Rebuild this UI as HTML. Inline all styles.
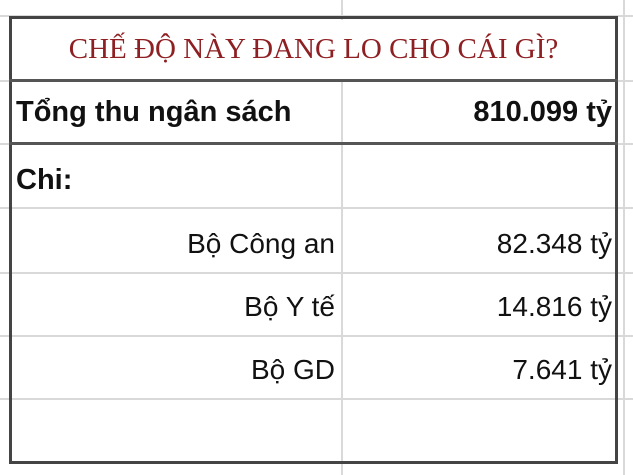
<!DOCTYPE html>
<html><head><meta charset="utf-8"><style>
body{margin:0;width:633px;height:475px;background:#fff;position:relative;overflow:hidden;font-family:"Liberation Sans",Arial,sans-serif;}
.g{position:absolute;background:#d9d9d9}
.b{position:absolute;background:#444}
.t{position:absolute;white-space:nowrap;color:#111;font-size:28px;line-height:1}
</style></head><body>
<div class="g" style="left:341px;top:0;width:2px;height:475px"></div>
<div class="g" style="left:623px;top:0;width:2px;height:475px"></div>
<div class="g" style="left:0;top:80px;width:633px;height:2px"></div>
<div class="g" style="left:0;top:143px;width:633px;height:2px"></div>
<div class="g" style="left:0;top:207px;width:633px;height:2px"></div>
<div class="g" style="left:0;top:272px;width:633px;height:2px"></div>
<div class="g" style="left:0;top:335px;width:633px;height:2px"></div>
<div class="g" style="left:0;top:398px;width:633px;height:2px"></div>
<div class="g" style="left:0;top:15px;width:633px;height:2px"></div>
<div style="position:absolute;left:12px;top:20px;width:603px;height:59px;background:#fff"></div>
<div class="b" style="left:9px;top:16px;width:3px;height:448px"></div>
<div class="b" style="left:615px;top:16px;width:3px;height:448px"></div>
<div class="b" style="left:9px;top:16px;width:609px;height:3px"></div>
<div class="b" style="left:9px;top:461px;width:609px;height:3px"></div>
<div class="b" style="left:9px;top:79px;width:609px;height:3px;background:#555"></div>
<div class="b" style="left:9px;top:142px;width:609px;height:3px;background:#555"></div>
<div class="t" style="left:0;width:627px;text-align:center;top:35px;font-family:'Liberation Serif',serif;color:#8e1f22;font-size:29px">CHẾ ĐỘ NÀY ĐANG LO CHO CÁI GÌ?</div>
<div class="t" style="left:16px;top:98px;font-weight:bold;font-size:29px">Tổng thu ngân sách</div>
<div class="t" style="right:21px;top:98px;font-weight:bold;font-size:29px">810.099 tỷ</div>
<div class="t" style="left:16px;top:166px;font-weight:bold;font-size:29px">Chi:</div>
<div class="t" style="right:298px;top:230px">Bộ Công an</div>
<div class="t" style="right:21px;top:230px">82.348 tỷ</div>
<div class="t" style="right:298px;top:293px">Bộ Y tế</div>
<div class="t" style="right:21px;top:293px">14.816 tỷ</div>
<div class="t" style="right:298px;top:356px">Bộ GD</div>
<div class="t" style="right:21px;top:356px">7.641 tỷ</div>
</body></html>
